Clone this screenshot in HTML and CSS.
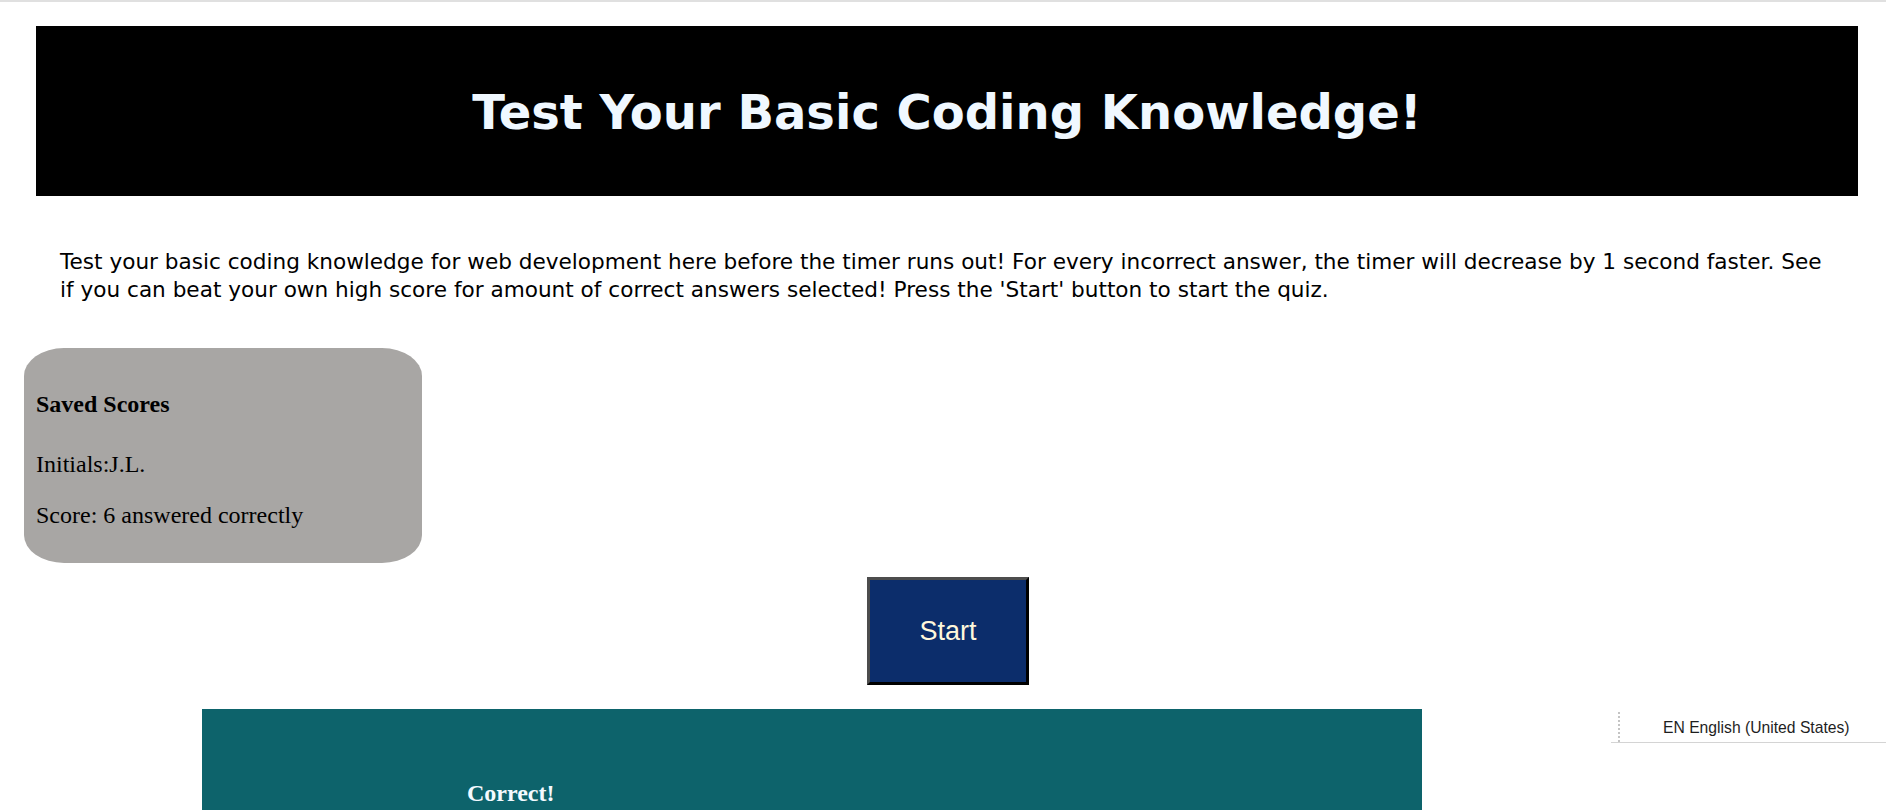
FILE: index.html
```html
<!DOCTYPE html>
<html lang="en">
<head>
<meta charset="utf-8">
<title>Coding Quiz</title>
<link rel="stylesheet" href="styles.css">
</head>
<body>
<div class="topbar"></div>
<header class="banner">
  <h1 class="banner-title">Test Your Basic Coding Knowledge!</h1>
</header>
<p class="intro">Test your basic coding knowledge for web development here before the timer runs out! For every incorrect answer, the timer will decrease by 1 second faster. See if you can beat your own high score for amount of correct answers selected! Press the 'Start' button to start the quiz.</p>
<section class="scores">
  <h3 class="scores-title">Saved Scores</h3>
  <p class="scores-line">Initials:J.L.</p>
  <p class="scores-line">Score: 6 answered correctly</p>
</section>
<div class="start-row">
  <button class="start-btn" type="button">Start</button>
</div>
<section class="quiz">
  <h3 class="result">Correct!</h3>
</section>
<div class="lang">
  <span class="lang-grip"></span>
  <span class="lang-text">EN English (United States)</span>
</div>
</body>
</html>
```
FILE: styles.css
```css
html, body {
  margin: 0;
  padding: 0;
  background: #ffffff;
  overflow: hidden;
}
body {
  position: relative;
  height: 810px;
  font-family: "Liberation Serif", "Times New Roman", serif;
  color: #000;
}
.topbar {
  height: 2px;
  background: #e0e0e0;
}
.banner {
  margin: 24px 28px 0 36px;
  height: 170px;
  background: #000;
  display: flex;
  align-items: center;
  justify-content: center;
}
.banner-title {
  margin: 0;
  font-family: "DejaVu Sans", sans-serif;
  font-weight: bold;
  font-size: 48px;
  line-height: 56px;
  color: #f0f8ff;
  position: relative;
  top: 1px;
}
.intro {
  margin: 52px 0 0 60px;
  width: 1772px;
  font-family: "DejaVu Sans", sans-serif;
  font-size: 21.6px;
  line-height: 27.5px;
  color: #000;
}
.scores {
  margin: 45px 0 0 24px;
  width: 398px;
  height: 215px;
  box-sizing: border-box;
  padding: 42px 12px 34px;
  background: #a8a6a4;
  border-radius: 40px / 28px;
}
.scores-title {
  margin: 0 0 32px;
  font-size: 24px;
  line-height: 28px;
  font-weight: bold;
}
.scores-line {
  margin: 0 0 23px;
  font-size: 24px;
  line-height: 28px;
}
.scores-line:last-child {
  margin-bottom: 0;
}
.start-row {
  margin: 14px 28px 0 36px;
  display: flex;
  justify-content: center;
}
.start-btn {
  width: 162px;
  height: 108px;
  box-sizing: border-box;
  background: #0c2d6b;
  border-style: solid;
  border-width: 3px;
  border-color: #4d4d4d #000 #000 #4d4d4d;
  color: #fff8dc;
  font-family: "Liberation Sans", Arial, sans-serif;
  font-size: 27px;
  padding: 0;
  position: relative;
  left: 1px;
}
.quiz {
  margin: 24px 0 0 202px;
  width: 1220px;
  height: 120px;
  box-sizing: border-box;
  padding: 70px 0 0 265px;
  background: #0d636b;
}
.result {
  margin: 0;
  font-size: 24px;
  line-height: 28px;
  font-weight: bold;
  color: #f4faff;
}
.lang {
  position: absolute;
  top: 712px;
  left: 1611px;
  right: 0;
  height: 30px;
  border-bottom: 1px solid #d4d4d4;
  display: flex;
  align-items: center;
}
.lang-grip {
  width: 0;
  height: 30px;
  margin-left: 7px;
  border-left: 2px dotted #c4c4c4;
}
.lang-text {
  margin-left: 43px;
  font-family: "Liberation Sans", Arial, sans-serif;
  font-size: 15.7px;
  color: #1e1e1e;
  position: relative;
  top: 1px;
}
```
